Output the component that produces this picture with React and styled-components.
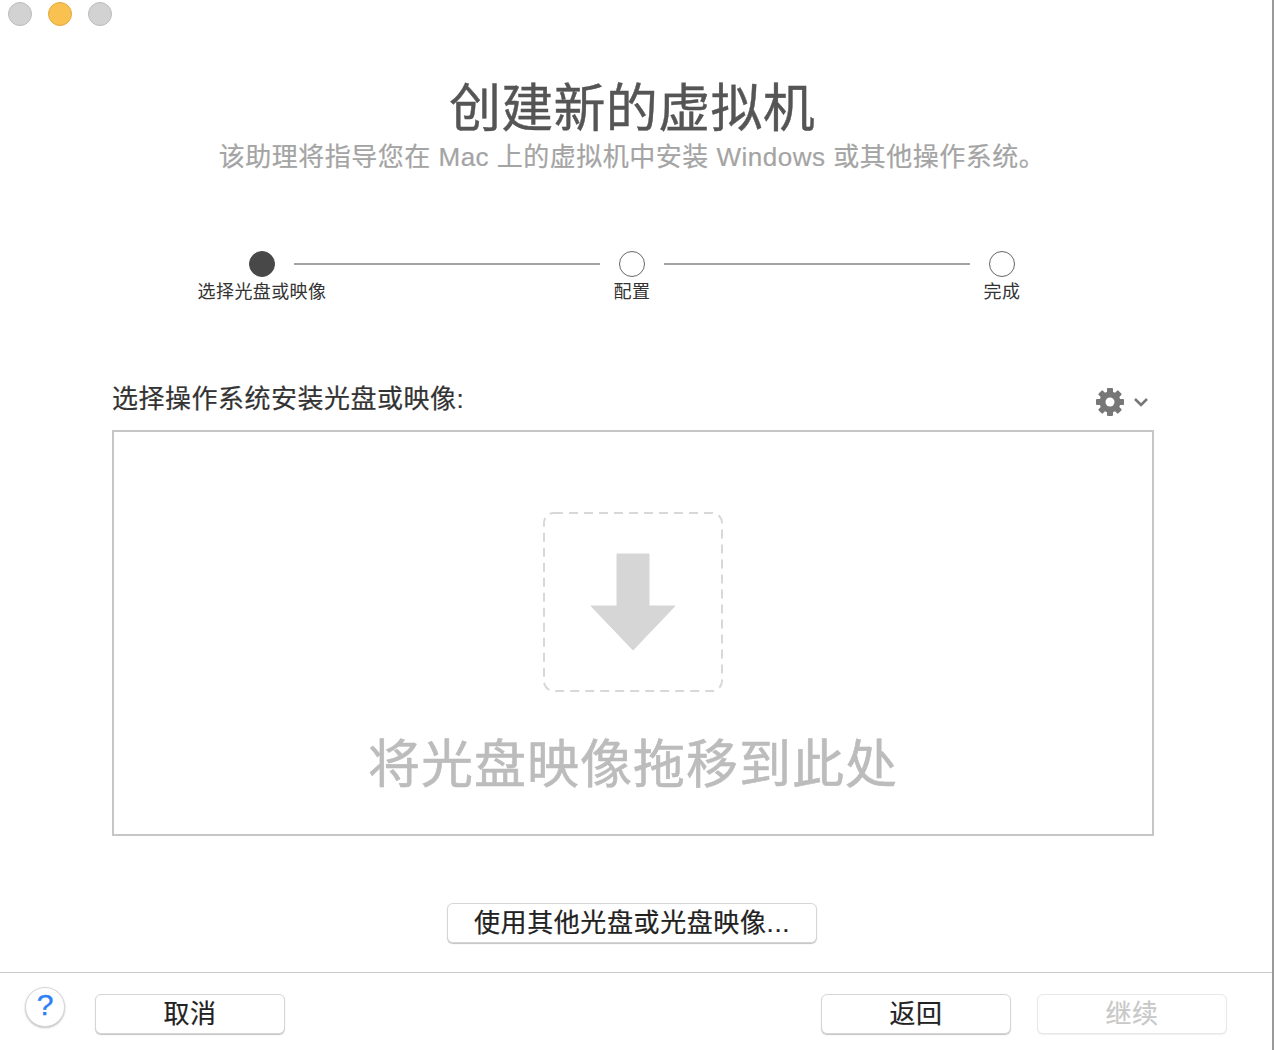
import React from "react";
import styled, { createGlobalStyle } from "styled-components";

const Global = createGlobalStyle`
  html, body { margin: 0; padding: 0; background: #fff; }
  body { font-family: "Liberation Sans", "Noto Sans CJK SC", sans-serif; overflow: hidden; }
  * { box-sizing: border-box; }
`;

const Window = styled.div`
  width: 1274px;
  height: 1050px;
  display: flex;
  flex-direction: column;
  background: #fff;
  border-right: 2px solid #9a9a9a;
  overflow: hidden;
`;
const TitleBar = styled.div`
  display: flex;
  gap: 16px;
  height: 28px;
  padding: 2px 0 0 8px;
`;
const Light = styled.span`
  width: 24px;
  height: 24px;
  border-radius: 50%;
  background: ${p => (p.$active ? "#f8c150" : "#d2d2d2")};
  border: 1px solid ${p => (p.$active ? "#e3a93e" : "#bcbcbc")};
`;
const Content = styled.main`
  display: flex;
  flex-direction: column;
  padding-right: 8px;
`;
const Header = styled.header`
  display: flex;
  flex-direction: column;
  align-items: center;
  padding-top: 49px;
`;
const Title = styled.h1`
  margin: 0;
  font-size: 52px;
  line-height: 64px;
  font-weight: 400;
  letter-spacing: 0.3px;
  color: #555;
  -webkit-text-stroke: 0.4px #555;
`;
const Subtitle = styled.p`
  margin: -2px 0 1px;
  font-size: 26px;
  line-height: 36px;
  letter-spacing: 0.5px;
  color: #a4a4a4;
  -webkit-text-stroke: 0.2px #a4a4a4;
`;
const Stepper = styled.div`
  display: flex;
  justify-content: center;
  margin-top: 75px;
  height: 54px;
`;
const Step = styled.div`
  width: 64px;
  display: flex;
  flex-direction: column;
  align-items: center;
`;
const Dot = styled.span`
  width: 26px;
  height: 26px;
  border-radius: 50%;
  background: ${p => (p.$done ? "#484848" : "#fff")};
  border: 1px solid ${p => (p.$done ? "#484848" : "#666")};
`;
const StepLabel = styled.span`
  margin-top: 3px;
  font-size: 18px;
  line-height: 24px;
  letter-spacing: 0.4px;
  color: #333;
  white-space: nowrap;
`;
const Connector = styled.span`
  width: 306px;
  height: 2px;
  margin-top: 12px;
  background: #a3a3a3;
`;
const Section = styled.section`
  margin: 74px 0 0 112px;
  width: 1042px;
`;
const SectionHead = styled.div`
  display: flex;
  align-items: center;
  justify-content: space-between;
  height: 40px;
  margin-bottom: 11px;
`;
const SectionLabel = styled.span`
  font-size: 26px;
  line-height: 36px;
  letter-spacing: 0.5px;
  color: #333;
  -webkit-text-stroke: 0.2px #333;
`;
const GearMenu = styled.span`
  display: flex;
  align-items: center;
  gap: 10px;
  margin: 6px 6px 0 0;
`;
const DropZone = styled.div`
  height: 406px;
  border: 2px solid #c6c6c6;
  display: flex;
  flex-direction: column;
  align-items: center;
  padding-top: 80px;
`;
const DropText = styled.div`
  margin-top: 37px;
  font-size: 52px;
  line-height: 72px;
  letter-spacing: 1px;
  color: #bcbcbc;
  -webkit-text-stroke: 0.6px #bcbcbc;
`;
const Other = styled.div`
  display: flex;
  justify-content: center;
  margin-top: 67px;
`;
const Button = styled.button`
  width: ${p => p.$w || 190}px;
  height: 40px;
  padding: 0;
  font-family: inherit;
  font-size: 26px;
  line-height: 36px;
  letter-spacing: 0.6px;
  background: #fff;
  color: ${p => (p.disabled ? "#c8c8c8" : "#222")};
  -webkit-text-stroke: 0.2px ${p => (p.disabled ? "#c8c8c8" : "#222")};
  border: 1px solid ${p => (p.disabled ? "#e8e8e8" : "#d6d6d6")};
  border-radius: 6px;
  box-shadow: ${p => (p.disabled ? "0 1px 1px rgba(0,0,0,.07)" : "0 1px 1px rgba(0,0,0,.24)")};
`;
const Footer = styled.footer`
  margin-top: 29px;
  height: 78px;
  border-top: 1px solid #cacaca;
  display: flex;
  align-items: flex-start;
  padding: 21px 45px 0 25px;
`;
const Help = styled.span`
  width: 40px;
  height: 40px;
  margin-top: -7px;
  border-radius: 50%;
  background: #fff;
  border: 1px solid #d6d6d6;
  box-shadow: 0 1px 2px rgba(0,0,0,.25);
  color: #2f80f5;
  font-size: 30px;
  line-height: 34px;
  text-align: center;
  -webkit-text-stroke: 0.4px #2f80f5;
`;
const Left = styled.div`
  margin-left: 30px;
`;
const Right = styled.div`
  margin-left: auto;
  display: flex;
  gap: 26px;
`;

const GearIcon = () => (
  <svg width="28" height="28" viewBox="0 0 28 28">
    <g fill="#777">
      {[0, 45, 90, 135].map(a => (
        <rect key={a} x="11" y="0" width="6" height="28" rx="1" transform={`rotate(${a} 14 14)`} />
      ))}
      <circle cx="14" cy="14" r="10.5" />
    </g>
    <circle cx="14" cy="14" r="4.5" fill="#fff" />
  </svg>
);

export default function App() {
  return (
    <Window>
      <Global />
      <TitleBar>
        <Light />
        <Light $active />
        <Light />
      </TitleBar>
      <Content>
        <Header>
          <Title>创建新的虚拟机</Title>
          <Subtitle>该助理将指导您在 Mac 上的虚拟机中安装 Windows 或其他操作系统。</Subtitle>
        </Header>
        <Stepper>
          <Step>
            <Dot $done />
            <StepLabel>选择光盘或映像</StepLabel>
          </Step>
          <Connector />
          <Step>
            <Dot />
            <StepLabel>配置</StepLabel>
          </Step>
          <Connector />
          <Step>
            <Dot />
            <StepLabel>完成</StepLabel>
          </Step>
        </Stepper>
        <Section>
          <SectionHead>
            <SectionLabel>选择操作系统安装光盘或映像:</SectionLabel>
            <GearMenu>
              <GearIcon />
              <svg width="14" height="9" viewBox="0 0 14 9" fill="none">
                <path d="M1 1 7 7l6-6" stroke="#777" strokeWidth="2.6" />
              </svg>
            </GearMenu>
          </SectionHead>
          <DropZone>
            <svg width="180" height="180" viewBox="0 0 180 180">
              <rect x="1" y="1" width="178" height="178" rx="10" fill="none" stroke="#d8d8d8" strokeWidth="2" strokeDasharray="9 6" />
              <path d="M74 42h32v52h26L90 138 48 94h26z" fill="#d6d6d6" stroke="#d6d6d6" strokeLinejoin="round" />
            </svg>
            <DropText>将光盘映像拖移到此处</DropText>
          </DropZone>
        </Section>
        <Other>
          <Button $w={370}>使用其他光盘或光盘映像...</Button>
        </Other>
      </Content>
      <Footer>
        <Help>?</Help>
        <Left>
          <Button>取消</Button>
        </Left>
        <Right>
          <Button>返回</Button>
          <Button disabled>继续</Button>
        </Right>
      </Footer>
    </Window>
  );
}
